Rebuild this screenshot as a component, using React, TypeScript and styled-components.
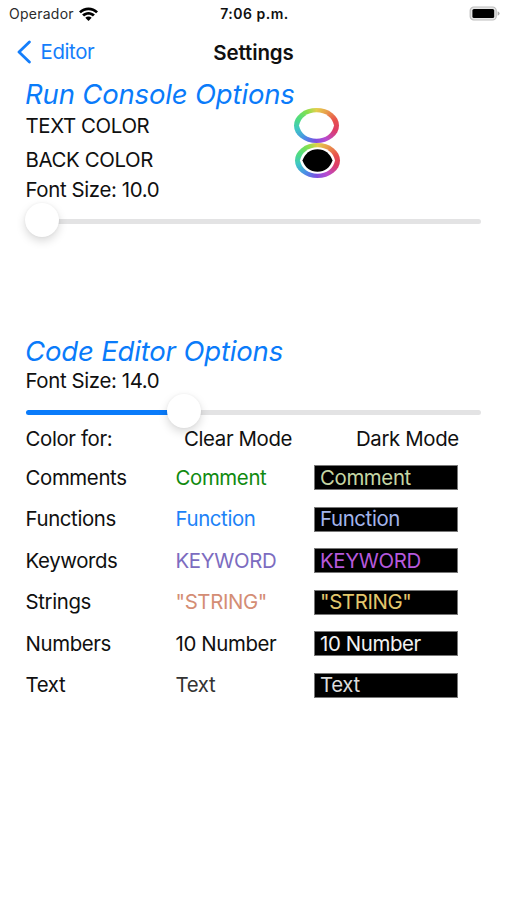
import React from "react";
import styled, { createGlobalStyle } from "styled-components";

const Global = createGlobalStyle`
  * { box-sizing: border-box; }
  html, body { margin: 0; background: #fff; }
  body { font-family: Inter, "Liberation Sans", sans-serif; color: #101010; }
`;

const Screen = styled.div`
  width: 507px;
  height: 900px;
  overflow: hidden;
  background: #fff;
`;

const StatusBar = styled.header`
  display: grid;
  grid-template-columns: 1fr auto 1fr;
  align-items: center;
  height: 27px;
  padding: 0 7px 0 9px;
  font-size: 14px;
`;

const Carrier = styled.div`
  display: flex;
  align-items: center;
  gap: 5px;
  letter-spacing: 0.25px;
  color: #2b2b2b;
`;

const Clock = styled.div`
  font-weight: 600;
  letter-spacing: 0.5px;
`;

const BatterySlot = styled.div`
  display: flex;
  justify-content: flex-end;
`;

const NavBar = styled.nav`
  display: grid;
  grid-template-columns: 1fr auto 1fr;
  align-items: center;
  height: 50px;
  padding: 0 17px;
`;

const BackLink = styled.div`
  display: flex;
  align-items: center;
  gap: 10px;
  color: #147efb;
  font-size: 20px;
`;

const NavTitle = styled.div`
  font-size: 20.5px;
  font-weight: 600;
  letter-spacing: -0.1px;
`;

const Content = styled.main`
  padding: 0 26px;
`;

const Line = styled.div<{ $h: number }>`
  display: flex;
  align-items: center;
  height: ${(p) => p.$h}px;
`;

const Heading = styled.h2`
  margin: 0 0 0 -1px;
  height: 34px;
  line-height: 34px;
  font-size: 27.5px;
  font-style: italic;
  font-weight: 400;
  letter-spacing: -0.17px;
  color: #0a7bfa;
  white-space: nowrap;
`;

const Label = styled.span`
  margin-left: -0.5px;
  font-size: 20.4px;
  line-height: 24px;
  letter-spacing: -0.37px;
  white-space: nowrap;
`;

const WellLabel = styled.div<{ $w: number }>`
  width: ${(p) => p.$w}px;
`;

const Well = styled.div`
  flex: none;
  display: flex;
  width: 45px;
  height: 35px;
  border-radius: 50%;
  background: conic-gradient(
    #e3cf4c, #e8a04c 35deg, #e8504c 75deg, #dd3c68 105deg, #b94bd0 145deg,
    #7a4fe0 185deg, #4a8ee6 225deg, #3fc8c4 260deg, #4fdc80 290deg,
    #86e04e 325deg, #e3cf4c 360deg
  );
`;

const SliderRow = styled.div<{ $h: number }>`
  display: flex;
  align-items: center;
  height: ${(p) => p.$h}px;
`;

const Track = styled.div<{ $value: number }>`
  flex: none;
  display: flex;
  align-items: center;
  width: 455px;
  height: 5px;
  border-radius: 3px;
  background: linear-gradient(
    to right,
    #0a7bfa ${(p) => p.$value}px,
    #e3e3e4 ${(p) => p.$value}px
  );
`;

const Thumb = styled.div<{ $x: number }>`
  flex: none;
  width: 34px;
  height: 34px;
  margin: -3px 0 0 ${(p) => p.$x}px;
  border-radius: 50%;
  background: #fff;
  box-shadow: 0 4px 10px rgba(0, 0, 0, 0.15), 0 0 3px rgba(0, 0, 0, 0.05);
`;

const Gap = styled.div`
  height: 91px;
`;

const TableHead = styled.div`
  display: grid;
  grid-template-columns: 158.5px 172px 1fr;
  align-items: center;
  height: 24px;
  margin: -4px 0 6px;
`;

const Row = styled.div`
  display: grid;
  grid-template-columns: 150px 137.5px 144.5px;
  align-items: center;
  height: 41.5px;
`;

const Sample = styled(Label)<{ $color: string }>`
  color: ${(p) => p.$color};
`;

const DarkCell = styled.div`
  display: flex;
  align-items: center;
  height: 25px;
  padding-left: 6px;
  border: 1px solid #777;
  background: #000;
`;

const WifiIcon = () => (
  <svg width="19" height="14" viewBox="0 0 19 14" fill="#000">
    <path d="M0 4.4C5.2-.9 13.8-.9 19 4.4L17.1 6.3C12.9 2.2 6.1 2.2 1.9 6.3Z" />
    <path d="M3.1 7.5C6.7 4 12.3 4 15.9 7.5L13.9 9.5C11.4 7.1 7.6 7.1 5.1 9.5Z" />
    <path d="M6.3 10.7C8.1 9.1 10.9 9.1 12.7 10.7L9.5 13.9Z" />
  </svg>
);

const BatteryIcon = () => (
  <svg width="31" height="15" viewBox="0 0 31 15">
    <rect x="1.2" y="1" width="26" height="13" rx="3.6" fill="#e6e6e6" stroke="#bdbdbd" strokeWidth="1.2" />
    <rect x="3.4" y="3" width="21.8" height="9" rx="1.6" fill="#000" />
    <path d="M28.6 5.2Q30.6 6 30.6 7.5Q30.6 9 28.6 9.8Z" fill="#aaa" />
  </svg>
);

const BackChevron = () => (
  <svg width="14" height="24" viewBox="0 0 14 24" fill="none" stroke="#147efb" strokeWidth="2.8" strokeLinecap="round" strokeLinejoin="round">
    <path d="M12.4 2L2 12L12.4 22" />
  </svg>
);

const ColorWell = ({ fill }: { fill: string }) => (
  <Well>
    <svg width="45" height="35" viewBox="0 0 45 35">
      <path d="M5 17.5C6.5 9.5 13.5 4.2 22.5 4.2S38.5 9.5 40 17.5C38.5 25.5 31.5 30.8 22.5 30.8S6.5 25.5 5 17.5Z" fill="#fff" />
      <path d="M7.5 17.5C10 10.5 15 6.2 22.5 6.2S35 10.5 37.5 17.5C35 24.5 30 28.8 22.5 28.8S10 24.5 7.5 17.5Z" fill={fill} />
    </svg>
  </Well>
);

const rows = [
  { name: "Comments", text: "Comment", clear: "#108a10", dark: "#c5d6a5" },
  { name: "Functions", text: "Function", clear: "#1c82f7", dark: "#a3b5ec" },
  { name: "Keywords", text: "KEYWORD", clear: "#7c6cc0", dark: "#b659dc" },
  { name: "Strings", text: '"STRING"', clear: "#d48d74", dark: "#e3c76c" },
  { name: "Numbers", text: "10 Number", clear: "#101010", dark: "#f2f2f2" },
  { name: "Text", text: "Text", clear: "#333333", dark: "#dcdcdc" },
];

export default function App() {
  return (
    <>
      <Global />
      <Screen>
        <StatusBar>
          <Carrier>Operador <WifiIcon /></Carrier>
          <Clock>7:06 p.m.</Clock>
          <BatterySlot><BatteryIcon /></BatterySlot>
        </StatusBar>
        <NavBar>
          <BackLink><BackChevron /><Label>Editor</Label></BackLink>
          <NavTitle>Settings</NavTitle>
        </NavBar>
        <Content>
          <Heading>Run Console Options</Heading>
          <Line $h={29}>
            <WellLabel $w={268}><Label>TEXT COLOR</Label></WellLabel>
            <ColorWell fill="#fff" />
          </Line>
          <Line $h={40}>
            <WellLabel $w={269}><Label>BACK COLOR</Label></WellLabel>
            <ColorWell fill="#000" />
          </Line>
          <Line $h={20}><Label>Font Size: 10.0</Label></Line>
          <SliderRow $h={43}>
            <Track $value={0}><Thumb $x={-1} /></Track>
          </SliderRow>
          <Gap />
          <Heading>Code Editor Options</Heading>
          <Line $h={25}><Label>Font Size: 14.0</Label></Line>
          <SliderRow $h={38}>
            <Track $value={157}><Thumb $x={141} /></Track>
          </SliderRow>
          <TableHead>
            <Label>Color for:</Label>
            <Label>Clear Mode</Label>
            <Label>Dark Mode</Label>
          </TableHead>
          {rows.map((r) => (
            <Row key={r.name}>
              <Label>{r.name}</Label>
              <Sample $color={r.clear}>{r.text}</Sample>
              <DarkCell><Sample $color={r.dark}>{r.text}</Sample></DarkCell>
            </Row>
          ))}
        </Content>
      </Screen>
    </>
  );
}
